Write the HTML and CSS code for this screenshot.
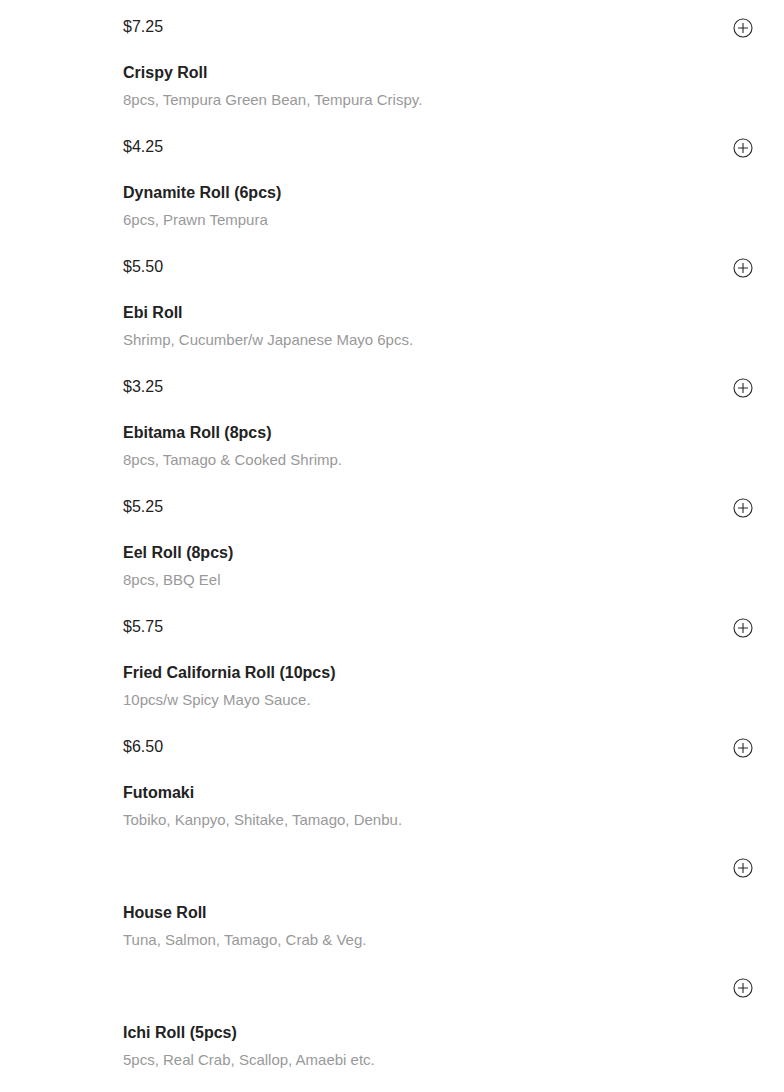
FILE: index.html
```html
<!DOCTYPE html>
<html>
<head>
<meta charset="utf-8">
<link rel="stylesheet" href="styles.css">
</head>
<body>
<div class="menu">
  <div class="price-row"><span class="price">$7.25</span><svg class="add" viewBox="0 0 20 20"><circle cx="10" cy="10" r="9"/><path d="M10 5v10M5 10h10"/></svg></div>

  <div class="item">
    <div class="title">Crispy Roll</div>
    <div class="desc">8pcs, Tempura Green Bean, Tempura Crispy.</div>
    <div class="price-row"><span class="price">$4.25</span><svg class="add" viewBox="0 0 20 20"><circle cx="10" cy="10" r="9"/><path d="M10 5v10M5 10h10"/></svg></div>
  </div>

  <div class="item">
    <div class="title">Dynamite Roll (6pcs)</div>
    <div class="desc">6pcs, Prawn Tempura</div>
    <div class="price-row"><span class="price">$5.50</span><svg class="add" viewBox="0 0 20 20"><circle cx="10" cy="10" r="9"/><path d="M10 5v10M5 10h10"/></svg></div>
  </div>

  <div class="item">
    <div class="title">Ebi Roll</div>
    <div class="desc">Shrimp, Cucumber/w Japanese Mayo 6pcs.</div>
    <div class="price-row"><span class="price">$3.25</span><svg class="add" viewBox="0 0 20 20"><circle cx="10" cy="10" r="9"/><path d="M10 5v10M5 10h10"/></svg></div>
  </div>

  <div class="item">
    <div class="title">Ebitama Roll (8pcs)</div>
    <div class="desc">8pcs, Tamago &amp; Cooked Shrimp.</div>
    <div class="price-row"><span class="price">$5.25</span><svg class="add" viewBox="0 0 20 20"><circle cx="10" cy="10" r="9"/><path d="M10 5v10M5 10h10"/></svg></div>
  </div>

  <div class="item">
    <div class="title">Eel Roll (8pcs)</div>
    <div class="desc">8pcs, BBQ Eel</div>
    <div class="price-row"><span class="price">$5.75</span><svg class="add" viewBox="0 0 20 20"><circle cx="10" cy="10" r="9"/><path d="M10 5v10M5 10h10"/></svg></div>
  </div>

  <div class="item">
    <div class="title">Fried California Roll (10pcs)</div>
    <div class="desc">10pcs/w Spicy Mayo Sauce.</div>
    <div class="price-row"><span class="price">$6.50</span><svg class="add" viewBox="0 0 20 20"><circle cx="10" cy="10" r="9"/><path d="M10 5v10M5 10h10"/></svg></div>
  </div>

  <div class="item">
    <div class="title">Futomaki</div>
    <div class="desc">Tobiko, Kanpyo, Shitake, Tamago, Denbu.</div>
    <div class="price-row"><span class="price"></span><svg class="add" viewBox="0 0 20 20"><circle cx="10" cy="10" r="9"/><path d="M10 5v10M5 10h10"/></svg></div>
  </div>

  <div class="item">
    <div class="title">House Roll</div>
    <div class="desc">Tuna, Salmon, Tamago, Crab &amp; Veg.</div>
    <div class="price-row"><span class="price"></span><svg class="add" viewBox="0 0 20 20"><circle cx="10" cy="10" r="9"/><path d="M10 5v10M5 10h10"/></svg></div>
  </div>

  <div class="item">
    <div class="title">Ichi Roll (5pcs)</div>
    <div class="desc">5pcs, Real Crab, Scallop, Amaebi etc.</div>
  </div>
</div>
</body>
</html>
```

FILE: styles.css
```css
html, body {
  margin: 0;
  padding: 0;
  background: #fff;
}
body {
  font-family: "Liberation Sans", Arial, sans-serif;
  color: #222;
}
.menu {
  padding: 1px 31px 0 123px;
}
.price-row {
  display: flex;
  align-items: center;
  justify-content: space-between;
  height: 52px;
}
.price {
  font-size: 16px;
  line-height: 20px;
  color: #222;
}
.add {
  width: 20px;
  height: 20px;
  margin-top: 2px;
  fill: none;
  stroke: #2a2a2a;
  stroke-width: 1.1;
  flex: none;
}
.item {
  display: flex;
  flex-direction: column;
}
.title {
  margin-top: 8px;
  font-size: 16px;
  font-weight: bold;
  line-height: 24px;
  color: #222;
}
.desc {
  margin-top: 4px;
  font-size: 15px;
  line-height: 22px;
  color: #999;
}
.item .price-row {
  margin-top: 10px;
}
```
